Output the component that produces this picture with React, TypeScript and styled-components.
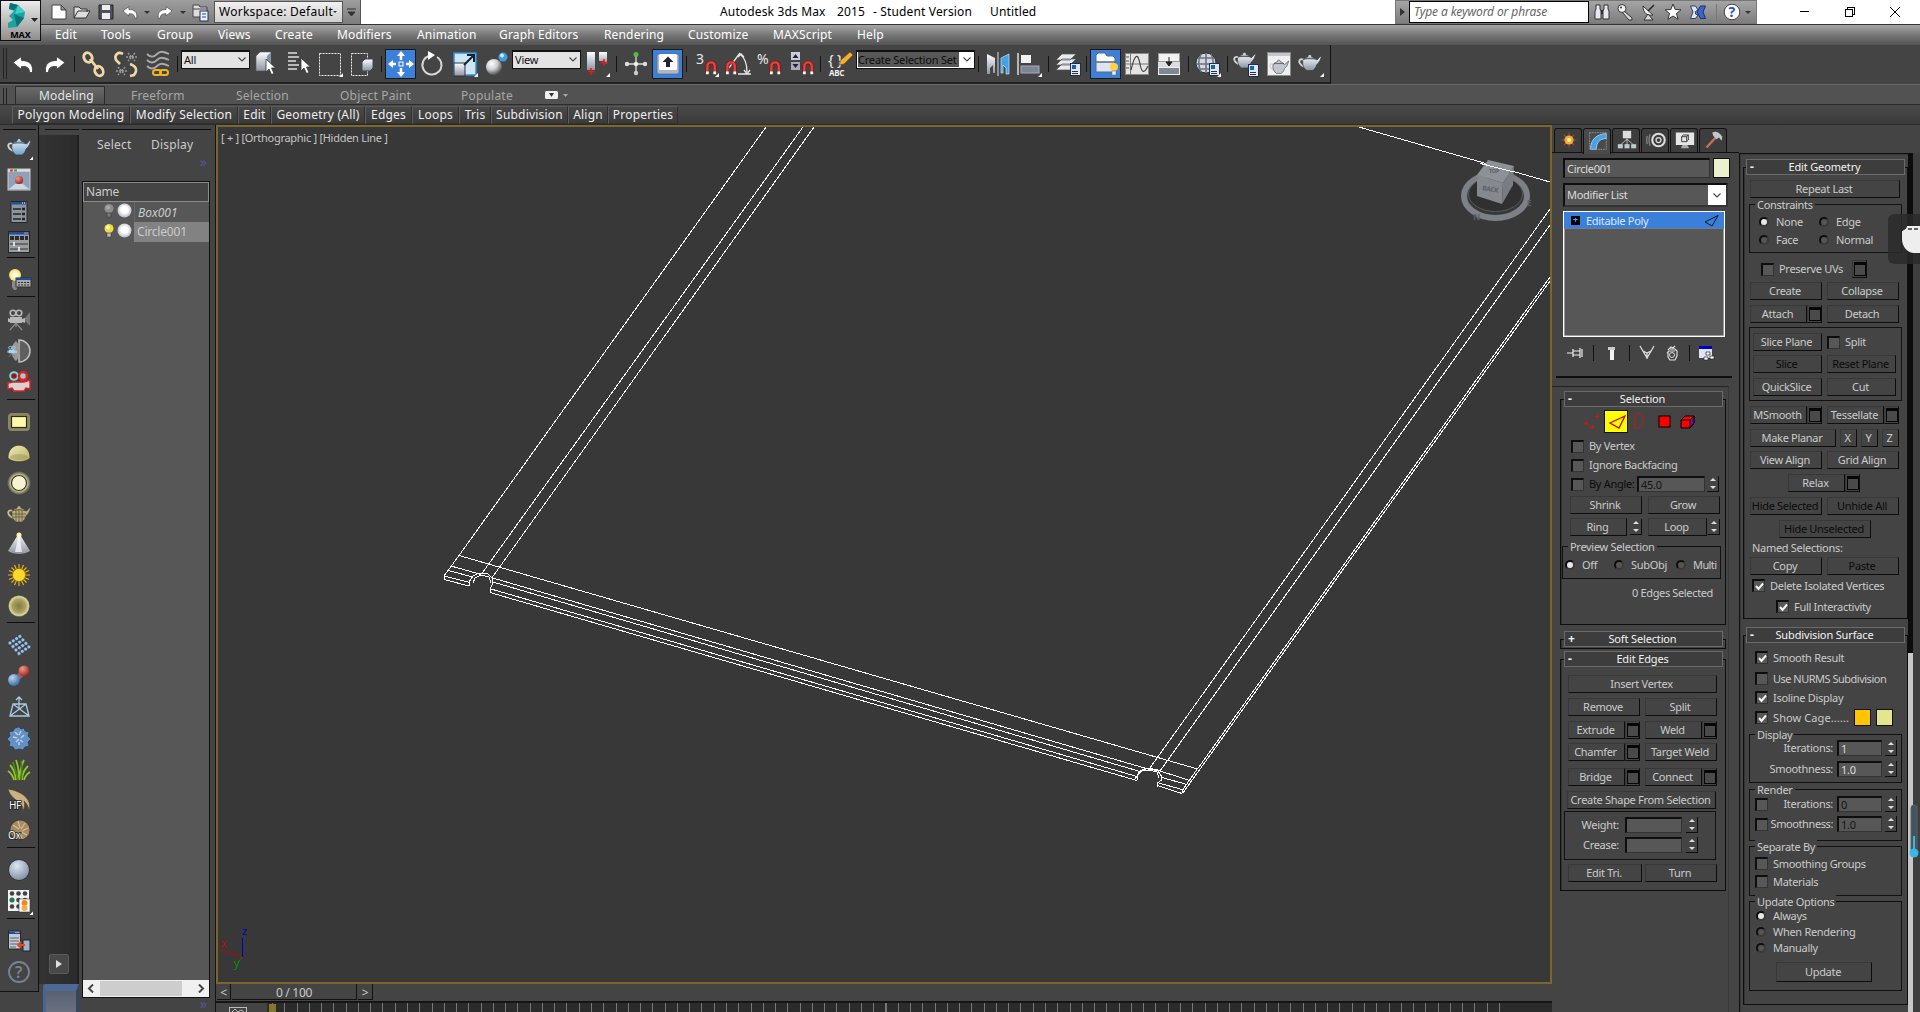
import React from 'react';
import styled, { createGlobalStyle, css } from 'styled-components';

const ui = '"Noto Sans", "Open Sans", sans-serif';

const Global = createGlobalStyle`
  * { box-sizing: border-box; }
  html, body { margin: 0; padding: 0; background: #444; overflow: hidden; }
  body { font: 11px/14px ${ui}; letter-spacing: -0.3px; color: #cbcbcb; cursor: default; }
  svg { display: block; flex: none; }
`;

const Shell = styled.div`
  width: 1920px; height: 1012px; overflow: hidden; display: flex; flex-direction: column; background: #444;
`;

/* ---------- icons ---------- */
const Svg = ({ s = 24, w, h, vb, children }: any) => (
  <svg width={w || s} height={h || s} viewBox={vb || '0 0 24 24'} fill="none">{children}</svg>
);

const DefsSvg = styled.svg`position: absolute; width: 0; height: 0;`;
const Defs = () => (
  <DefsSvg>
    <defs>
      <linearGradient id="met" x1="0" y1="0" x2="0" y2="1"><stop offset="0" stopColor="#fff" /><stop offset="1" stopColor="#8b94a3" /></linearGradient>
      <linearGradient id="blu" x1="0" y1="0" x2="0" y2="1"><stop offset="0" stopColor="#e4f1fb" /><stop offset="1" stopColor="#6d9fc6" /></linearGradient>
      <radialGradient id="ball" cx=".35" cy=".3" r=".8"><stop offset="0" stopColor="#fff" /><stop offset=".45" stopColor="#cdcfd2" /><stop offset="1" stopColor="#333" /></radialGradient>
      <radialGradient id="white" cx=".5" cy=".45" r=".6"><stop offset=".4" stopColor="#fff" /><stop offset="1" stopColor="#a9abb8" /></radialGradient>
      <radialGradient id="grey" cx=".4" cy=".3" r=".8"><stop offset="0" stopColor="#dde5f2" /><stop offset="1" stopColor="#75849a" /></radialGradient>
      <radialGradient id="blueb" cx=".35" cy=".3" r=".8"><stop offset="0" stopColor="#b9d9f5" /><stop offset="1" stopColor="#2d5e95" /></radialGradient>
      <radialGradient id="redb" cx=".35" cy=".3" r=".8"><stop offset="0" stopColor="#f39a8b" /><stop offset="1" stopColor="#8d1a14" /></radialGradient>
      <radialGradient id="yel" cx=".5" cy=".5" r=".55"><stop offset=".2" stopColor="#fffef0" /><stop offset="1" stopColor="#eedf4a" /></radialGradient>
      <radialGradient id="glow" cx=".5" cy=".5" r=".5"><stop offset=".6" stopColor="#e7e2a8" /><stop offset="1" stopColor="#e7e2a8" stopOpacity="0" /></radialGradient>
      <radialGradient id="disc" cx=".5" cy=".5" r=".5"><stop offset="0" stopColor="#817b3c" /><stop offset=".65" stopColor="#aba465" /><stop offset="1" stopColor="#efeab2" /></radialGradient>
      <linearGradient id="dome" x1="0" y1="0" x2="1" y2="1"><stop offset="0" stopColor="#f3eeb4" /><stop offset="1" stopColor="#b3ae64" /></linearGradient>
    </defs>
  </DefsSvg>
);

const Corner = () => <path d="M27 27v-4l-4 4z" fill="#fff" />;
const Cursor = ({ x = 14, y = 10 }: any) => (
  <path transform={`translate(${x} ${y})`} d="M0 0v13l3-3 2.500 5.500 2.500-1-2.500-5.500h4z" fill="#fff" stroke="#333" strokeWidth=".8" />
);
const Magnet = ({ x = 12, y = 13 }: any) => (
  <g transform={`translate(${x} ${y}) scale(.92)`}>
    <path d="M1.500 12V5.500a4 4 0 0 1 8 0V12" stroke="#7c1410" strokeWidth="4" />
    <path d="M1.500 12V5.500a4 4 0 0 1 8 0V12" stroke="#e8423a" strokeWidth="2.600" />
    <path d="M0 13h3M8 13h3" stroke="#fff" strokeWidth="3" />
  </g>
);
const Teapot = ({ fill = 'url(#met)', grid }: any) => (
  <g stroke="#3c3c3c" strokeWidth=".7">
    <path d="M6 9C1 7 0 11 3 14l3 2" stroke={grid ? '#c8bd8a' : '#cfd6de'} strokeWidth="1.800" />
    <path d="M5 9c2-2 12-2 14 0 2 0 2-3 5-4-1 3-2 7-5 9-1 4-3 5-4 6H9c-3-2-5-6-4-11z" fill={fill} />
    <path d="M10 6c0-3 4-3 4 0 2 .5 3 1 4 2H6c1-1 2-1.500 4-2z" fill={fill} />
    {grid && <path d="M5 12h14M6 15h12M9 8v11M12 7v13M15 8v11" stroke="#575236" />}
  </g>
);
const Win = ({ x = 2, y = 2, w = 20, h = 20, top = '#1d4f9c', bg = '#b4b4b4' }: any) => (
  <g>
    <rect x={x} y={y} width={w} height={h} fill={bg} stroke="#252525" />
    <rect x={x + 0.5} y={y + 0.5} width={w - 1} height="2.500" fill={top} />
    <path d={`M${x + w - 5} ${y + 1.5}h1m1 0h1`} stroke="#fff" /><path d={`M${x + w - 1.5} ${y + 1.5}h1`} stroke="#f33" />
  </g>
);
const Small = ({ x = 16, y = 14 }: any) => (
  <g transform={`translate(${x} ${y})`}>
    <rect x=".5" y=".5" width="10" height="12" fill="#dfe7f2" stroke="#1e2f4c" />
    <rect x="2" y="2" width="4" height="4" fill="#1860c0" /><path d="M2 8.500h6M2 10.500h6" stroke="#333" />
  </g>
);
const UndoShape = ({ flip }: any) => (
  <path transform={flip ? 'translate(28 0) scale(-1 1)' : ''} d="M4 12.500l8.500-6v4c7.500 0 11 3.500 11 9v3h-3c0-4.500-2.500-6.500-8-6v3z" fill="#fff" stroke="#333" strokeWidth=".8" />
);

const T28: Record<string, React.ReactNode> = {
  undo: <UndoShape />, redo: <UndoShape flip />,
  link: <g stroke="#f0d9a8" strokeWidth="2.800"><ellipse cx="8" cy="7.500" rx="4" ry="5" transform="rotate(-30 8 7.500)" /><path d="M10 9l8 10" /><ellipse cx="19" cy="21" rx="4" ry="5" transform="rotate(-30 19 21)" /></g>,
  unlink: <g stroke="#f0d9a8" strokeWidth="2.600"><path d="M11 4C6 1 2 5 4 10l4 4M18 14c6 2 8 6 4 11l-4 1" /><path d="M14 7h11M16 3l7 8M23 3l-7 8M4 21h11M6 17l7 8M13 17l-7 8" stroke="#9a9a9a" strokeWidth="1.300" strokeDasharray="2 1" /></g>,
  bind: <g stroke="#aaa" strokeWidth="1.800"><path d="M3 4c4 4 7 3 10 0s5-3 12 0M3 10c4 4 7 3 10 0s5-3 12 0M3 16c4 4 7 3 10 0s5-3 12 0" /><g stroke="#f2b51f" strokeWidth="2"><rect x="9" y="20" width="8" height="5" rx="2.500" /><rect x="16" y="20" width="8" height="5" rx="2.500" /></g></g>,
  select: <g><path d="M4 6l4-4h11v14l-4 5H4z" fill="url(#met)" stroke="#555" strokeWidth=".6" /><path d="M15 6v15l4-5V2z" fill="#8792a3" /><Cursor x={14} y={9} /></g>,
  byname: <g><path d="M4 3h9M4 7h11M4 11h8M4 15h11M4 19h9" stroke="#e0e0e0" strokeWidth="1.300" /><Cursor x={17} y={8} /></g>,
  rect: <g><rect x="3.500" y="3.500" width="21" height="22" stroke="#eee" strokeDasharray="2 1" /><Corner /></g>,
  window: <g><rect x="3.500" y="3.500" width="16" height="22" stroke="#eee" strokeDasharray="2 1" /><path d="M14 12l3-3h8v9l-3 3h-8z" fill="url(#met)" stroke="#445" /></g>,
  move: <g fill="#fff"><path d="M14 1l4 5h-8zM14 27l4-5h-8zM1 14l5-4v8zM27 14l-5-4v8z" /><path d="M14 5v5M14 18v5M5 14h4M19 14h4" stroke="#fff" strokeWidth="2.500" /><rect x="12" y="12" width="4" height="4" fill="none" stroke="#fff" /></g>,
  rotate: <g><path d="M11 6a9.500 9.500 0 1 0 8 1" stroke="#d8d8d8" strokeWidth="2" /><path d="M10 1l7 4-7 5z" fill="#fff" /></g>,
  scale: <g><rect x="3" y="3" width="22" height="22" fill="#cfe6f5" stroke="#3191d8" strokeWidth="1.500" /><rect x="3" y="13" width="11" height="13" fill="url(#met)" stroke="#334" /><path d="M13 15L22 6M16 5h7v7" stroke="#18222e" strokeWidth="2" /><Corner /></g>,
  place: <g><circle cx="11" cy="17" r="8" fill="url(#ball)" /><circle cx="20" cy="7" r="4.500" fill="#3d9de2" /><circle cx="19" cy="5.500" r="2" fill="#c4ecff" /></g>,
  pivot: <g><rect x="4" y="2" width="8" height="18" fill="url(#met)" /><path d="M16 2h8v12l-4-3h-4z" fill="url(#met)" /><path d="M8 18v7M5 21.500h7M21 9v7M17.500 12.500h7" stroke="#e21b1b" strokeWidth="1.600" /><Corner /></g>,
  manip: <g><path d="M14 3v22M3 14h22" stroke="#ddd" strokeWidth="1.300" /><circle cx="14" cy="4.500" r="2.500" fill="#4fbf3f" /><circle cx="14" cy="14" r="2.200" fill="#eee" /><circle cx="14" cy="23" r="2.200" fill="#ccc" /><circle cx="5" cy="14" r="2.200" fill="#ddd" /><circle cx="23" cy="14" r="2.200" fill="#ddd" /></g>,
  keyb: <g><rect x="3" y="4" width="22" height="20" rx="2" fill="#aeb6c2" stroke="#5a6270" strokeWidth=".6" /><rect x="5" y="4" width="18" height="16" rx="1.500" fill="#fff" /><path d="M14 6.500l5.500 5.500H16v5h-4v-5H8.500z" fill="#223" /></g>,
  snap3: <g><text x="4" y="14" fill="#e8e8e8" fontSize="14">3</text><Magnet x={14} y={11} /><Corner /></g>,
  angle: <g><path d="M4 19L16 3M14 24h13M16 4c5 4 7 10 7 18M14 7l3-3 3 3M20 20l3 4 3-4" stroke="#e8e8e8" strokeWidth="1.300" /><Magnet x={2} y={11} /></g>,
  pct: <g><text x="1" y="14" fill="#e8e8e8" fontSize="14">%</text><Magnet x={14} y={11} /></g>,
  spin: <g><rect x="3" y="2" width="9" height="8" fill="#ccd" /><rect x="3" y="12" width="9" height="8" fill="#aab" /><path d="M7.500 4l3 4h-6zM7.500 18l3-4h-6z" fill="#223" /><Magnet x={15} y={11} /></g>,
  sets: <g><text x="2" y="15" fill="#e8e8e8" fontSize="15">{'{ }'}</text><path d="M13 15l2-5L24 2l3 3-9 9z" fill="#f3b02c" stroke="#7a4a10" strokeWidth=".6" /><text x="3" y="26" fill="#eee" fontSize="8" fontWeight="700">ABC</text></g>,
  mirror: <g><path d="M3 4l8 4v15H9v-8l-3 3v6H3z" fill="url(#met)" /><path d="M25 4l-8 4v15h2v-8l3 3v6h3z" fill="#43a2e8" stroke="#c5e6ff" strokeWidth=".7" /><path d="M14 2v24" stroke="#ddd" /></g>,
  align: <g><path d="M3 3v22" stroke="#ddd" strokeWidth="1.500" /><rect x="6" y="5" width="10" height="8" fill="#f2f2f2" /><rect x="6" y="16" width="18" height="7" fill="#7c8695" stroke="#aab" /><Corner /></g>,
  layers: <g><path d="M8 4h14l-6 6H2zM8 9h14l-6 6H2zM8 14h14l-6 6H2z" fill="#e7ebf0" stroke="#555" strokeWidth=".7" /><Small x={16} y={13} /></g>,
  folder: <g><path d="M4 22V8h19v14z" fill="#dde4ee" stroke="#5d6878" /><path d="M4 12V5l2-2h7l2 3h6l2 2v4z" fill="#f8fafd" stroke="#5d6878" /><path d="M4 12h19" stroke="#5d6878" /><circle cx="22" cy="17" r="4" fill="#ffd13d" /><path d="M20 21h4v4h-4z" fill="#eee" stroke="#666" strokeWidth=".5" /></g>,
  curve: <g><rect x="2.500" y="3.500" width="23" height="21" fill="#e4e4e4" stroke="#888" /><path d="M7.500 3v22M2 14h24" stroke="#777" /><path d="M8 20c4-17 7-17 9-6s5 8 8 2" stroke="#444" strokeWidth="1.200" /><path d="M3 7h3M3 11h3M3 18h3" stroke="#555" /></g>,
  schem: <g><rect x="3.500" y="3.500" width="21" height="8" fill="#f2f2f2" stroke="#999" /><rect x="3" y="12" width="22" height="5" fill="#ddd" /><rect x="3.500" y="17.500" width="21" height="7" fill="#7f8893" stroke="#eee" /><path d="M14 7v6M11 12h6l-3 4z" stroke="#222" fill="#222" /></g>,
  mat: <g><circle cx="12" cy="13" r="10" fill="#d4d8de" stroke="#333" /><path d="M4 8h16M2 14h20M5 19h14M12 3v20M7 4c-3 6-3 12 0 18M17 4c3 6 3 12 0 18" stroke="#6b7380" strokeWidth="1.600" /><Small x={15} y={13} /><Corner /></g>,
  rsetup: <g><g transform="translate(0 -1) scale(.95)"><Teapot /></g><Small x={15} y={14} /></g>,
  rframe: <g><rect x="2.500" y="2.500" width="23" height="23" fill="#f0f0f0" stroke="#888" /><path d="M3 4.500h22" stroke="#c4c8ce" strokeWidth="3" /><g transform="translate(4 7) scale(.82)"><Teapot fill="#c3c7cc" /></g></g>,
  render: <g><g transform="translate(1 1) scale(.98)"><Teapot /></g><Corner /></g>,
};

const Bulb = ({ on = true }: any) => (
  <g><circle cx="8" cy="5.500" r="4.500" fill={on ? '#f5d93a' : '#8d8d8d'} /><circle cx="7" cy="4.500" r="2" fill={on ? '#fffbd0' : '#aaa'} /><path d="M6 10h4v4H6z" fill={on ? '#bbb' : '#777'} stroke="#333" strokeWidth=".5" /></g>
);
const Cam = ({ c = '#b8b8b8' }: any) => (
  <g><circle cx="6" cy="5" r="2.800" stroke={c} strokeWidth="1.600" /><circle cx="12" cy="5" r="2.800" stroke={c} strokeWidth="1.600" /><rect x="3" y="9" width="12" height="6" fill={c} /><path d="M1 10l2 1v3H1zM15 11l3-1v5l-3-1z" fill={c} /><path d="M9 15l-6 7M9 15l6 7M9 15v4" stroke="#888" strokeWidth="1.300" /></g>
);

const L24: Record<string, React.ReactNode> = {
  pot: <g><Teapot fill="url(#blu)" /><path d="M26 25v-3.500l-3.500 3.500z" fill="#fff" /></g>,
  vray: <g><rect x="1" y="1" width="22" height="21" fill="#8fa0b8" stroke="#c9c9c9" /><path d="M1 2.500h22" stroke="#ddd" strokeWidth="2.500" /><path d="M3 2.500h3" stroke="#e33" strokeWidth="2" /><path d="M7 2.500h3" stroke="#3a3" strokeWidth="2" /><path d="M2 21l6-5h8l6 5z" fill="#cdd6e2" /><circle cx="12" cy="12" r="4" fill="url(#redb)" /></g>,
  sheet: <g><Win x={4} w={16} h={21} y={1.5} bg="#8d939b" /><path d="M6 9h8M6 14h8M6 19h8" stroke="#222" strokeWidth="1.300" /><path d="M15 9h3M15 14h3M15 19h3" stroke="#222" strokeWidth="2.500" /></g>,
  tracks: <g><Win x={1.5} y={1.5} w={21} h={21} bg="#9a9da2" /><path d="M3 8h18" stroke="#2c2c2c" strokeWidth="4" strokeDasharray="4 1" /><path d="M3 14h18M3 19h18" stroke="#333" /><path d="M7 12v4M12 17v4" stroke="#fff" strokeWidth="1.500" /></g>,
  lamp: <g><circle cx="8" cy="7" r="6" fill="url(#yel)" /><path d="M5 13h6v6l-2 3H7l-2-3z" fill="#888" /><rect x="9" y="10" width="15" height="9" fill="#a8a8a8" stroke="#333" /><path d="M9 11h15" stroke="#1d4f9c" strokeWidth="2" /><path d="M11 14.500h11M11 17h11" stroke="#333" strokeDasharray="2 1" /></g>,
  cam: <g><Cam /><path d="M23 4v14l-5-5v-3z" fill="#777" /></g>,
  camdome: <g><path d="M12 1a11 11 0 0 1 0 22z" fill="#5f5f5f" stroke="#c0c0c0" strokeWidth="1.500" /><path d="M9 2c5 5 5 15 0 20a13 13 0 0 1 0-20z" fill="#999" /><g transform="translate(0 6) scale(.55)"><Cam c="#a4d4ee" /></g></g>,
  camred: <g><circle cx="7" cy="6" r="3.800" stroke="#6fe0e0" strokeWidth="2" fill="#a11" /><circle cx="16" cy="6" r="4" stroke="#e32222" strokeWidth="2.500" fill="#9cd" /><path d="M1 13l5-1h11l6-2v9l-4-1-2 3H7l-2-3-4 1z" fill="#ddd0d0" stroke="#d22" strokeWidth="1.400" /></g>,
  plane: <g><rect x="1" y="3" width="22" height="18" rx="4" fill="#9c9873" opacity=".8" /><rect x="4.500" y="6.500" width="15" height="11" fill="#fff9a8" stroke="#2d2b1c" strokeWidth="1.200" /></g>,
  dome: <g><path d="M1 18C1 1 23 1 23 18c-5 5-17 5-22 0z" fill="url(#dome)" stroke="#35331c" strokeWidth=".6" /><ellipse cx="12" cy="17" rx="9" ry="3" fill="#8f8a55" opacity=".4" /></g>,
  sph: <g><circle cx="12" cy="12" r="12" fill="url(#glow)" /><circle cx="12" cy="12" r="7.500" fill="#f7f4d4" stroke="#3a3823" strokeWidth="1.200" /></g>,
  mesh: <Teapot fill="#b9ad78" grid />,
  ies: <g><path d="M12 2l11 18c-6 4-16 4-22 0z" fill="url(#met)" /><path d="M12 3l3 18H8z" fill="#fff" opacity=".7" /><circle cx="12" cy="4" r="2.500" fill="#fff6b0" /></g>,
  sun: <g><path d="M12 1v22M1 12h22M4.500 4.500l15 15M19.500 4.500l-15 15M7.500 2l9 20M16.500 2l-9 20M2 7.500l20 9M22 7.500l-20 9" stroke="#e6b21e" strokeWidth="1.200" /><circle cx="12" cy="12" r="6.500" fill="#ffd829" stroke="#8c6a08" strokeWidth=".7" /></g>,
  disc: <circle cx="12" cy="12" r="10.500" fill="url(#disc)" stroke="#55522c" strokeWidth=".5" />,
  inst: <g>{[0, 1, 2, 3].map(i => [0, 1, 2, 3].map(j => <circle key={`${i}${j}`} cx={3 + i * 3 + j * 3.3} cy={10 - j * 2.2 + i * 3.5} r="1.900" fill="#9fc2e4" stroke="#243447" strokeWidth=".5" />))}</g>,
  meta: <g><path d="M8 12l7-6 3 5-6 5z" fill="#9d5f72" /><circle cx="7" cy="16" r="6" fill="url(#blueb)" /><circle cx="17" cy="7" r="5.500" fill="url(#redb)" /></g>,
  cage: <g stroke="#a5cbe4" strokeWidth="1.300"><path d="M3 21L6 9h13l3 12zM3 21L19 9M22 21L6 9M12 2v12M9 5l3-3 3 3" /></g>,
  fur: <g><path d="M12 1l2 2 3-1 1 3 4 1-1 4 3 3-3 3 1 4-4 1-2 3-4-1-4 1-2-3-4-1 1-4-3-3 3-3-1-4 4-1 2-3z" fill="#6590c2" stroke="#20324a" strokeWidth=".6" /><path d="M8 6l3 3M14 5l-2 4M6 11l4 1M17 9l-3 3M9 16l3-3M16 16l-3-2M12 19v-3" stroke="#b5d3f0" strokeWidth="1.500" /></g>,
  grass: <g stroke="#8fc62c" strokeWidth="1.800"><path d="M12 23C12 14 11 8 9 3M12 23c1-8 2-14 5-20M9 23C8 16 6 11 3 8M15 23c0-7 3-11 6-14M7 23c-1-4-3-7-6-9M17 23c1-4 3-6 6-8" /><path d="M11 23C9 14 7 10 6 5M14 23c1-7 1-13 0-19" stroke="#4f8216" /></g>,
  hf: <g><path d="M1 1c5 1 15 3 20 11 2 4 2 7 1 10-1-5-3-7-5-9 1 4 1 6-1 10 1-10-12-10-15-22z" fill="#c9b184" stroke="#4d3e22" strokeWidth=".6" /><text x="2" y="21" fontSize="10" fill="#fff" stroke="#222" strokeWidth="1.500" paintOrder="stroke">HF</text></g>,
  ox: <g><circle cx="13" cy="11" r="10" fill="#a58a63" stroke="#332a1c" strokeWidth=".6" /><path d="M6 6l6 4M11 2l2 7M18 4l-4 6M21 9l-6 3M20 16l-6-3M15 20l-2-6" stroke="#d6bd93" strokeWidth="1.300" /><text x="1" y="20" fontSize="10" fill="#fff" stroke="#222" strokeWidth="1.500" paintOrder="stroke">Ox</text></g>,
  ball: <circle cx="12" cy="12" r="10.500" fill="url(#grey)" stroke="#222" strokeWidth=".8" />,
  lib: <g><rect x="1" y="1" width="21" height="21" fill="#f2f2f2" /><g fill="#3d4247">{[3, 9.5, 16].map(x => [3, 9.5, 16].map(y => <circle key={`${x}${y}`} cx={x + 2} cy={y + 1.5} r="2.300" />))}</g><circle cx="5" cy="11" r="2.500" fill="#1d7a5a" /><rect x="12" y="10" width="11" height="13" fill="#fff" stroke="#333" strokeWidth=".6" /><circle cx="17.500" cy="14" r="3" fill="#f08a1c" /><circle cx="17.500" cy="19" r="3" fill="#f9a94a" /><path d="M26 26v-3.500l-3.500 3.500z" fill="#fff" /></g>,
  list: <g><Win x={1.5} y={2} w={12} h={18} bg="#c4cad2" /><path d="M3 9h9M3 12h9M3 15h9M3 18h6" stroke="#667" /><rect x="16" y="11" width="7" height="11" fill="#9fb4c8" stroke="#222" /><path d="M18 16h-7m3-3l-3 3 3 3" stroke="#e04a2a" strokeWidth="2" /></g>,
  help: <g><circle cx="12" cy="12" r="10" stroke="#778397" strokeWidth="1.800" /><text x="8" y="18" fontSize="16" fontWeight="600" fill="#778397">?</text></g>,
};

/* ---------- title area ---------- */
const TitleBar = styled.header`
  height: 25px; display: flex; background: #fff; border-bottom: 1px solid #333; position: relative;
  font-size: 12px; letter-spacing: .2px; color: #000;
`;
const AppButton = styled.div`
  position: absolute; left: 0; top: 0; width: 41px; height: 41px; z-index: 3; border: 1px solid #111;
  background: linear-gradient(#ececec, #8f8f8f); display: flex; flex-direction: column; align-items: center; color: #000;
  span { font: 700 9px/9px ${ui}; letter-spacing: 0; margin-top: 1px; }
`;
const Quick = styled.div`
  width: 361px; height: 24px; flex: none; padding-left: 47px; display: flex; align-items: center; background: linear-gradient(#9e9e9e, #7c7c7c);
  border-right: 1px solid #555;
`;
const QSlot = styled.div<{ $w: number }>`width: ${p => p.$w}px; display: flex; justify-content: center; flex: none;`;
const Workspace = styled.div`
  width: 129px; height: 22px; margin-left: 1px; padding: 0 5px 0 4px; border: 1px solid #555; background: linear-gradient(#f0f0f0, #cfcfcf);
  display: flex; align-items: center; justify-content: space-between; font-size: 12px; letter-spacing: .25px; white-space: nowrap;
`;
const Tri = styled.i<{ $c?: string; $s?: number }>`
  border: ${p => p.$s || 3}px solid transparent; border-top-color: ${p => p.$c || '#333'}; border-bottom: 0; width: 0; height: 0; flex: none;
`;
const Caption = styled.div`
  margin-left: 359px; width: 675px; flex: none; display: flex; align-items: center; white-space: pre; letter-spacing: .15px;
  span:nth-child(1) { width: 117px; } span:nth-child(2) { width: 36px; } span:nth-child(3) { width: 117px; }
`;
const Info = styled.div`
  width: 362px; height: 24px; flex: none; background: linear-gradient(#a5a5a5, #7d7d7d); border: 1px solid #777; display: flex; align-items: center;
`;
const SearchBox = styled.div`
  width: 180px; height: 22px; flex: none; margin-right: 1px; background: #fff; border: 1px solid #000; padding: 0 4px; color: #666; font: italic 12px/19px ${ui}; letter-spacing: -.1px;
`;
const WinBtns = styled.div`margin-left: 34px; flex: none; display: flex; align-items: center; gap: 22px;`;

const MenuBar = styled.nav`
  height: 20px; flex: none; background: linear-gradient(#a6a6a6, #777 50%, #545454); display: flex; padding-left: 55px;
  font-size: 12px; line-height: 19px; letter-spacing: .15px; color: #fff;
`;
const MenuItem = styled.span<{ $w: number }>`width: ${p => p.$w}px; flex: none; white-space: nowrap;`;

const Toolbar = styled.div`
  height: 39px; width: 1331px; flex: none; display: flex; align-items: center; background: #444;
  border-right: 1px solid #111; border-bottom: 2px solid #222; padding-left: 3px;
`;
const Grip = styled.div<{ $h?: number }>`width: 4px; height: ${p => p.$h || 31}px; border: solid #222; border-width: 0 1px; flex: none;`;
const TSep = styled.div`width: 7px; height: 16px; flex: none; display: flex; justify-content: center; &::after { content: ''; width: 1px; background: #151515; }`;
const TSlot = styled.div<{ $w: number; $on?: boolean }>`
  width: ${p => p.$w}px; height: 30px; flex: none; display: flex; align-items: center; justify-content: center; svg { overflow: visible; }
  ${p => p.$on && css`background: #3d80da; border: 1px solid #1a1a1a;`}
`;
const TSelect = styled.div<{ $w: number; $bg?: string }>`
  width: ${p => p.$w}px; height: 19px; margin-bottom: 9px; flex: none; display: flex; align-items: center; justify-content: space-between;
  background: ${p => p.$bg || '#e3e3e3'}; border: 1px solid #111; border-top-width: 2px; color: #111; padding: 0 3px 0 2px; letter-spacing: -.2px; white-space: nowrap;
`;
const SelText = styled.span`background: #575757; color: #0d0d0d; line-height: 15px; width: 101px; margin-left: -1px; letter-spacing: -.2px;`;

const RibbonTabs = styled.div`
  height: 20px; flex: none; display: flex; align-items: flex-end; background: #525252; border-top: 1px solid #696969; padding-left: 3px;
  font-size: 12px; letter-spacing: .2px; color: #a7a7a7;
`;
const RTab = styled.div<{ $w: number; $on?: boolean }>`
  width: ${p => p.$w}px; height: 18px; line-height: 19px; flex: none; white-space: nowrap;
  ${p => p.$on && css`background: linear-gradient(#6b6b6b, #4e4e4e); border: 1px solid #2c2c2c; border-bottom: 0; color: #e4e4e4; padding-left: 23px; margin: 0 26px 0 8px; line-height: 18px;`}
`;
const RibbonPanels = styled.div`
  height: 21px; flex: none; display: flex; background: linear-gradient(#4a4a4a, #3a3a3a); border-top: 1px solid #2c2c2c; border-bottom: 1px solid #2c2c2c; padding: 1px 0 0 12px;
  font-size: 12px; letter-spacing: .2px; color: #eee;
`;
const RPanel = styled.div<{ $w: number }>`
  width: ${p => p.$w}px; height: 18px; line-height: 16px; flex: none; display: flex; justify-content: center; border: 1px solid #2f2f2f; border-left-color: #5e5e5e; border-top-color: #5a5a5a; white-space: nowrap;
  &:first-child { letter-spacing: .3px; }
`;

/* ---------- body ---------- */
const Body = styled.main`display: flex; flex: 1; min-height: 0;`;
const LeftBar = styled.aside`width: 39px; height: 867px; border-right: 1px solid #111; border-bottom: 1px solid #111; padding: 4px 0 0 3px; flex: none;`;
const LSlot = styled.div<{ $mt: number }>`margin: ${p => p.$mt}px 0 0 4px; height: 24px; width: 24px; svg { overflow: visible; }`;
const LSep = styled.div<{ $mt: number }>`height: 1px; width: 28px; margin: ${p => p.$mt}px 0 0 4px; background: #0f0f0f;`;
const TopLine = styled.div<{ $w: number }>`height: 1px; background: #0f0f0f; width: ${p => p.$w}px; flex: none;`;

const Dark = styled.aside`
  width: 41px; flex: none; display: flex; flex-direction: column; align-items: flex-end; padding: 4px 1px 0 0;
`;
const DarkFill = styled.div`
  margin-top: 5px; width: 40px; height: 849px; flex: none; background: linear-gradient(90deg, #333, #2b2b2b); border-right: 2px solid #202020; display: flex; align-items: flex-end; padding: 0 0 10px 10px;
`;
const PlayBtn = styled.div`
  width: 20px; height: 20px; background: #484848; border: 1px solid #5a5a5a; border-radius: 2px; display: flex; align-items: center; justify-content: center;
  &::after { content: ''; border: 4px solid transparent; border-left: 6px solid #ddd; border-right: 0; }
`;
const BlueTab = styled.div`
  width: 36px; flex: 1; border: 3px solid #46658f; border-bottom: 0; border-right-color: #33465f; border-top-color: #4c6a93; border-top-width: 7px; border-radius: 3px 0 0 0; background: linear-gradient(#586173, #6a7080);
`;

const Scene = styled.aside`width: 136px; flex: none; padding: 4px 0 0 2px; display: flex; flex-direction: column; border-right: 1px solid #151515;`;
const SceneTabs = styled.div`display: flex; margin: 7px 0 0 15px; height: 16px; font-size: 12px; line-height: 15px; letter-spacing: .2px; span { width: 54px; }`;
const Chev = styled.div<{ $mt: number }>`color: #55569c; font-size: 14px; line-height: 12px; letter-spacing: -1px; text-align: right; padding-right: 9px; margin-top: ${p => p.$mt}px; height: 12px;`;
const Tree = styled.div`width: 128px; height: 817px; border: 1px solid #111; background: #575757; display: flex; flex-direction: column; font-size: 12px;`;
const TreeHead = styled.div`height: 20px; border: 1px solid #8c8c8c; background: #444; padding-left: 2px; line-height: 17px; letter-spacing: -.2px;`;
const TreeRow = styled.div<{ $on?: boolean }>`
  height: 20px; display: flex; align-items: flex-start; padding: 1px 0 0 18px;
  span { flex: 1; height: 20px; line-height: 19px; margin: -1px 0 0 1px; padding-left: 3px; letter-spacing: -.2px; ${p => (p.$on ? 'background: #828282; line-height: 20px;' : 'font-style: italic; border-left: 1px solid #666; line-height: 21px; letter-spacing: 0;')} }
`;
const HScroll = styled.div`
  margin-top: auto; height: 17px; background: #f0f0f0; display: flex; align-items: center; padding: 0 4px; justify-content: space-between;
  i { width: 82px; height: 15px; background: #cdcdcd; margin: 0 14px 0 4px; }
`;

const Center = styled.section`width: 1336px; flex: none; display: flex; flex-direction: column;`;
const View = styled.div`
  height: 859px; width: 1336px; border: 2px solid #7b672b; background: #383838; position: relative; overflow: hidden; svg { position: absolute; inset: 0; }
`;
const ViewLabel = styled.div`position: absolute; left: 3px; top: 4px; font-size: 11px; line-height: 14px; letter-spacing: -.28px; white-space: pre; color: #c6c6c6; z-index: 1;`;
const TimeRow = styled.div`display: flex; height: 19px; flex: none; border-bottom: 2px solid #151515; padding-left: 1px;`;
const TimeBtn = styled.div<{ $w: number }>`
  width: ${p => p.$w}px; height: 16px; border: solid #111; border-width: 0 1px 1px 0; text-align: center; line-height: 18px; font-size: 12px; margin-right: 1px; flex: none;
`;
const Track = styled.div`
  display: flex; flex: 1; padding-left: 13px; min-height: 0; overflow: hidden;
`;
const Ticks = styled.div`
  margin-left: 20px; width: 1286px; flex: none; background: #2b2b2b; padding-left: 2px; display: flex;
  i { width: 7px; height: 8px; margin-top: 1px; background: #85781f; }
`;
const TickRun = styled.div`
  flex: 1; margin-left: -4px; background: repeating-linear-gradient(90deg, #777 0 1px, transparent 1px 12.270px); background-size: 1228px 100%; background-repeat: no-repeat;
`;

/* ---------- command panel ---------- */
const Command = styled.aside`width: 187px; flex: none; padding-top: 3px; display: flex; flex-direction: column;`;
const CTabs = styled.div`display: flex; height: 25px; padding-left: 2px; border-bottom: 1px solid #111;`;
const CTab = styled.div<{ $on?: boolean }>`
  width: 28px; margin-right: 1px; height: ${p => (p.$on ? 26 : 24)}px; border: 1px solid #111; border-bottom: 0; border-radius: 3px 3px 0 0; background: ${p => (p.$on ? '#4a4a4a' : '#3d3d3d')};
  display: flex; align-items: center; justify-content: center; padding: 0 0 2px 1px;
`;
const Row = styled.div<{ $mt?: number; $x?: number; $h?: number; $gap?: number }>`
  display: flex; align-items: center; flex: none; white-space: nowrap; margin-top: ${p => p.$mt || 0}px; padding-left: ${p => p.$x || 0}px; height: ${p => p.$h || 18}px; gap: ${p => p.$gap || 0}px;
`;
const Field = styled.div<{ $w: number; $h?: number; $off?: boolean; $ml?: number }>`
  width: ${p => p.$w}px; height: ${p => p.$h || 16}px; line-height: ${p => (p.$h || 16) - 3}px; margin-left: ${p => p.$ml || 0}px; flex: none; background: #575757; border: solid #0e0e0e; border-width: 2px 1px 1px 2px; border-right-color: #333; border-bottom-color: #333;
  padding-left: 2px; color: ${p => (p.$off ? '#151515' : '#dcdcdc')};
`;
const Swatch = styled.div<{ $c: string; $w?: number; $h?: number; $ml?: number }>`
  width: ${p => p.$w || 17}px; height: ${p => p.$h || 17}px; background: ${p => p.$c}; border: 1px solid #111; margin-left: ${p => p.$ml || 0}px; flex: none;
`;
const Combo = styled.div`
  width: 165px; height: 24px; border: 2px solid #0e0e0e; border-right-color: #333; border-bottom-color: #333; background: #575757; display: flex; justify-content: space-between; line-height: 19px; padding-left: 2px; color: #dcdcdc;
  div { width: 18px; height: 20px; background: #fff; display: flex; align-items: center; justify-content: center; }
`;
const Stack = styled.div`margin: 4px 0 0 11px; width: 162px; height: 126px; border: 1px solid #fff; background: #575757; flex: none; box-shadow: inset 0 0 0 .5px #ddd;`;
const StackRow = styled.div`
  height: 17px; background: #3a80db; border-bottom: 1px solid #6e7d90; display: flex; align-items: center; padding: 1px 5px 0 7px; color: #dfe8f5; line-height: 14px;
  b { width: 9px; height: 9px; background: #000; color: #5aa0ff; font: 700 9px/8px ${ui}; text-align: center; margin-right: 6px; letter-spacing: 0; }
  span { flex: 1; }
`;
const Btn = styled.div<{ $w: number; $off?: boolean; $h?: number; $ml?: number }>`
  width: ${p => p.$w}px; height: ${p => p.$h || 18}px; line-height: ${p => (p.$h || 18) - 2}px; margin-left: ${p => p.$ml || 0}px; display: flex; justify-content: center; padding-right: 2px; flex: none;
  border: 1px solid #383838; border-right-color: #0d0d0d; border-bottom-color: #0d0d0d; color: ${p => (p.$off ? '#0b0b0b' : '#cbcbcb')};
`;
const Opt = styled.div<{ $ml?: number }>`
  width: 15px; height: 18px; flex: none; border: 1px solid #383838; border-right-color: #0d0d0d; border-bottom-color: #0d0d0d; margin-left: ${p => p.$ml || 0}px; display: flex; align-items: center; justify-content: center;
  &::after { content: ''; width: 10px; height: 10px; border: 1px solid #060606; border-top-width: 3px; background: #4a4a4a; }
`;
const Box = styled.div`
  width: 13px; height: 13px; flex: none; background: #575757; border: solid #0e0e0e; border-width: 2px 1px 1px 2px; border-right-color: #333; border-bottom-color: #333; display: flex; align-items: center; justify-content: center;
`;
const Check = ({ on }: { on?: boolean }) => (
  <Box>{on && <svg width="9" height="9" viewBox="0 0 9 9"><path d="M1 4l2.500 3L8 1.500" fill="none" stroke="#f4f4f4" strokeWidth="2" /></svg>}</Box>
);
const Radio = styled.i<{ $on?: boolean }>`
  width: 10px; height: 10px; flex: none; border-radius: 50%; border: 2px solid #0e0e0e; border-right-color: #3a3a3a; border-bottom-color: #3a3a3a; background: ${p => (p.$on ? '#e8e8e8' : '#555')};
`;
const Lab = styled.span<{ $w?: number; $ml?: number; $off?: boolean; $r?: boolean; $ls?: number }>`
  flex: none; ${p => p.$w && `width: ${p.$w}px;`} margin-left: ${p => p.$ml ?? 5}px; ${p => p.$off && 'color: #0b0b0b;'} ${p => p.$r && 'text-align: right;'} letter-spacing: ${p => p.$ls ?? -0.3}px;
`;
const SpinBox = styled.div<{ $ml?: number; $h?: number }>`
  width: 12px; height: ${p => p.$h || 16}px; flex: none; margin-left: ${p => p.$ml || 0}px; border: solid #0e0e0e; border-width: 0 1px 1px 0; display: flex; flex-direction: column; align-items: center; justify-content: space-around;
  &::before { content: ''; border: 3px solid transparent; border-bottom-color: #ddd; border-top: 0; }
  &::after { content: ''; border: 3px solid transparent; border-top-color: #ddd; border-bottom: 0; }
`;
const Roll = styled.div<{ $mt: number; $ml: number; $w: number }>`margin: ${p => p.$mt}px 0 0 ${p => p.$ml}px; width: ${p => p.$w}px; flex: none;`;
const RollHead = styled.div<{ $l: number }>`
  height: 16px; margin: 0 3px 0 ${p => p.$l}px; border: 1px solid #6a6a6a; background: #3d3d3d; color: #f2f2f2; position: relative; z-index: 1; display: flex; line-height: 14px; letter-spacing: -.15px;
  b { width: 16px; padding-left: 3px; font-size: 12px; line-height: 13px; } span { flex: 1; text-align: center; padding-right: 18px; }
`;
const RollBody = styled.div<{ $h: number }>`
  margin-top: -8px; height: ${p => p.$h}px; border: 1px solid #0e0e0e; box-shadow: inset 1px 0 0 #333; padding-top: 8px; display: flex; flex-direction: column;
`;
const Group = styled.div<{ $mt: number; $h: number; $ml: number; $w: number }>`
  margin: ${p => p.$mt}px 0 0 ${p => p.$ml}px; width: ${p => p.$w}px; height: ${p => p.$h}px; border: 1px solid #111; flex: none; display: flex; flex-direction: column;
`;
const GTitle = styled.span`align-self: flex-start; margin: -7px 0 -1px 5px; padding: 0 2px; height: 14px; background: #444; flex: none;`;
const Geo = styled.aside`width: 169px; margin-top: 28px; flex: none; border-left: 1px solid #111; border-top: 1px solid #111; box-shadow: inset 1px 1px 0 #383838; display: flex; flex-direction: column;`;
const Edge = styled.div`width: 12px; flex: none; margin-top: 28px; display: flex; background: #3e3e3e; position: relative;`;
const Bar = styled.div`width: 5px; background: linear-gradient(#0c0c0c 0 500px, #c8c8c8 500px);`;
const MouseBadge = styled.div`
  position: absolute; right: 0; top: 61px; width: 32px; height: 50px; background: rgba(42,42,42,.85); border-radius: 6px 0 0 6px; display: flex; align-items: center; justify-content: flex-end;
`;
const Thermo = styled.div`position: absolute; left: 1px; top: 651px;`;
const ToolIcons = styled.div`
  height: 16px; margin: 8px 0 0 14px; display: flex; align-items: center; flex: none;
  i { width: 1px; height: 16px; background: #111; }
`;
const Rule = styled.div`margin: 15px 0 0 4px; width: 176px; height: 2px; background: #0e0e0e; flex: none;`;
const Scroller = styled.div`margin-top: 8px; width: 177px; flex: 1; border-top: 1px solid #222; border-right: 1px solid #393939;`;

const Chevron = () => <svg width="8" height="5" viewBox="0 0 8 5"><path d="M.5 .5L4 4 7.500 .5" fill="none" stroke="#444" strokeWidth="1.100" /></svg>;
const TI = ({ n, w = 32, on }: any) => <TSlot $w={w} $on={on}><Svg s={28} vb="0 0 28 28">{T28[n]}</Svg></TSlot>;
const LI = ({ n, mt }: any) => <LSlot $mt={mt}><Svg>{L24[n]}</Svg></LSlot>;

const Scene3D = () => (
  <svg width="1332" height="855" viewBox="218 127 1332 855" fill="none">
    <g stroke="#fff" strokeWidth="1" shapeRendering="crispEdges">
      <path d="M766 127L459 555.500 444 576v3.500l25 6.500M803 127L481.500 574M814 127L492.500 577M1359 127L1550 182" />
      <path d="M459 555.500L1197.500 769M451 566l30 8.500M448 570.500l25 6.500M444 576l26 6.500" />
      <path d="M491 577.500L1148 769l12 2 30 9.500M493 582L1140 771.500M491 589L1137 776.500M490 592.500L1137 780.500" />
      <path d="M470 586l-1-4 4-6 6-3 9 1 4 4 1 5-3 6v4M473 583l2-5 6-3 8 2 2 6" />
      <path d="M1162 777.500l25 7M1157 782.500l25 7M1157 785.500l25 8 1-4 14-20" />
      <path d="M1137 780.500l1-6 5-5 6-1 8 1 4 6 0 5-4 3v3M1135 779l5-8 9-1 8 2 2 6" />
      <path d="M1149.500 768.500L1550 209M1160 771L1550 225M1197.500 769L1550 277M1182.500 793.500L1550 281" />
    </g>
    <ellipse cx="1495.500" cy="196" rx="31.500" ry="22" stroke="#7d8187" strokeWidth="6" />
    <ellipse cx="1495.500" cy="194" rx="27" ry="17.500" fill="#303030" stroke="#555a60" />
    <path d="M1477 175l26 8-1 21-25-8z" fill="#85888d" />
    <path d="M1488 160l26 6-11 17-26-8z" fill="#8e9197" />
    <path d="M1503 183l11-17-1 19-11 19z" fill="#797c82" />
    <path d="M1480.500 163.500L1514 172" stroke="#fff" shapeRendering="crispEdges" />
    <g fill="#5c6067" fontSize="6.500" fontWeight="700"><text x="1482" y="190" transform="rotate(10 1482 190)">BACK</text><text x="1489" y="173" fontSize="5.500">TOP</text><text x="1473" y="220" fontSize="9">N</text><text x="1527" y="206" fontSize="8">E</text></g>
    <path d="M242.500 957v-19" stroke="#0000c8" /><path d="M242 956.500L221 950" stroke="#c80000" /><path d="M242 957l-4 6" stroke="#009600" strokeDasharray="2 1" />
    <g fontSize="11"><text x="242" y="935" fill="#0000c8">z</text><text x="220.500" y="947" fill="#c80000">x</text><text x="234" y="967" fill="#009600">y</text></g>
  </svg>
);

const menus: [string, number][] = [['Edit', 46], ['Tools', 56], ['Group', 61], ['Views', 57], ['Create', 62], ['Modifiers', 80], ['Animation', 82], ['Graph Editors', 105], ['Rendering', 84], ['Customize', 85], ['MAXScript', 84], ['Help', 40]];
const panels: [string, number][] = [['Polygon Modeling', 118], ['Modify Selection', 108], ['Edit', 33], ['Geometry (All)', 94], ['Edges', 47], ['Loops', 47], ['Tris', 32], ['Subdivision', 77], ['Align', 40], ['Properties', 70]];
const leftTools: [string, number][] = [['pot', 5], ['vray', 9], ['sheet', 8], ['tracks', 6], ['-', 3], ['lamp', 10], ['-', 4], ['cam', 11], ['camdome', 7], ['camred', 7], ['-', 5], ['plane', 10], ['dome', 6], ['sph', 7], ['mesh', 7], ['ies', 5], ['sun', 8], ['disc', 7], ['-', 4], ['inst', 10], ['meta', 7], ['cage', 7], ['fur', 7], ['grass', 7], ['hf', 7], ['ox', 7], ['-', 4], ['ball', 10], ['lib', 7], ['-', 5], ['list', 10], ['help', 7]];

const Head = ({ t, open = true, l = 4 }: any) => <RollHead $l={l}><b>{open ? '-' : '+'}</b><span>{t}</span></RollHead>;

export default function App() {
  return (
    <Shell>
      <Global /><Defs />
      <TitleBar>
        <AppButton>
          <Svg w={37} h={28} vb="0 0 37 28"><path d="M8 2l8 2 7 7-1 6-7 9-9 1 0-5 5-3-4-4 5-5-5-2z" fill="#19a5a3" /><path d="M8 2l8 2-4 5-5-1zM12 13l10 4-7 9z" fill="#0b7377" /><path d="M16 4l7 7-10 2z" fill="#3fd0c8" /><path d="M29 17h7l-3.500 4z" fill="#223" /></Svg>
          <span>MAX</span>
        </AppButton>
        <Quick>
          <QSlot $w={23}><Svg s={18} vb="0 0 18 18"><path d="M2 2h9l5 5v9H2zM11 2v5h5" fill="#fff" stroke="#444" /></Svg></QSlot>
          <QSlot $w={24}><Svg s={18} vb="0 0 18 18"><path d="M1 15V4h5l2 2h6v3M1 15l4-7h12l-4 7z" fill="#ddd" stroke="#333" /></Svg></QSlot>
          <QSlot $w={24}><Svg s={18} vb="0 0 18 18"><path d="M2 2h14v14H2z" fill="#4c5260" stroke="#222" /><path d="M5 2h8v5H5zM5 10h8v6H5z" fill="#eee" /></Svg></QSlot>
          <QSlot $w={24}><Svg s={20} vb="0 0 28 28"><UndoShape /></Svg></QSlot>
          <QSlot $w={10}><Tri /></QSlot>
          <QSlot $w={26}><Svg s={20} vb="0 0 28 28"><UndoShape flip /></Svg></QSlot>
          <QSlot $w={10}><Tri /></QSlot>
          <QSlot $w={25}><Svg s={19} vb="0 0 19 19"><path d="M2 2h6l1 2h7v10H2z" fill="#ddd" stroke="#444" /><path d="M2 6h14" stroke="#444" /><rect x="9" y="8" width="8" height="10" fill="#eef" stroke="#235" /><path d="M11 11h4M11 14h4" stroke="#15a" /></Svg></QSlot>
          <Workspace><span>Workspace: Default</span><Tri $s={2.5} /></Workspace>
          <QSlot $w={17}><Svg w={9} h={9} vb="0 0 9 9"><path d="M0 1h9M1 4h7L4.500 8z" fill="#333" stroke="#333" /></Svg></QSlot>
        </Quick>
        <Caption><span>Autodesk 3ds Max</span><span>2015</span><span>- Student Version</span><span>Untitled</span></Caption>
        <Info>
          <QSlot $w={13}><Svg w={5} h={8} vb="0 0 5 8"><path d="M0 0l5 4-5 4z" fill="#333" /></Svg></QSlot>
          <SearchBox>Type a keyword or phrase</SearchBox>
          <QSlot $w={23}><Svg s={18} vb="0 0 18 18"><path d="M3 2h4v4l1 2v8H2V8l1-2zM11 2h4v4l1 2v8h-6V8l1-2z" fill="#e8e8ee" stroke="#333" /><path d="M8 7h2v4H8z" fill="#333" /></Svg></QSlot>
          <QSlot $w={24}><Svg s={18} vb="0 0 18 18"><path d="M8 8l8 7v2h-3L6.500 9.500z" fill="#ddd" stroke="#333" /><circle cx="6" cy="5.500" r="4" fill="#f2f2f2" stroke="#333" /><circle cx="5" cy="4.500" r="1" fill="#333" /></Svg></QSlot>
          <QSlot $w={24}><Svg s={18} vb="0 0 18 18"><path d="M3 3c0 7 4 10 10 9z" fill="#eee" stroke="#333" /><path d="M8 8l6-6" stroke="#222" strokeWidth="1.500" /><path d="M8 11l5 6H4z" fill="#ddd" stroke="#333" /></Svg></QSlot>
          <QSlot $w={24}><Svg s={18} vb="0 0 18 18"><path d="M9 1l2.200 5.500 5.800.3-4.500 3.700 1.500 5.800L9 13l-5 3.300 1.500-5.800L1 6.800l5.800-.3z" fill="#fff" stroke="#333" /></Svg></QSlot>
          <QSlot $w={25}><Svg s={18} vb="0 0 18 18"><path d="M1.500 3h5l2.500 4-2.500 1.500V11L9 12l-2.500 3.500h-5L4 9z" fill="#dfe6f6" stroke="#33406e" /><path d="M16.500 3h-5L8 9l3.500 6.500h5L14 9z" fill="#3a66cc" stroke="#1c2f6e" /></Svg></QSlot>
          <QSlot $w={12}><Svg w={1} h={16} vb="0 0 1 16"><path d="M.5 0v16" stroke="#777" /></Svg></QSlot>
          <QSlot $w={20}><Svg s={18} vb="0 0 18 18"><circle cx="9" cy="9" r="7.800" fill="#fff" stroke="#444" /><text x="5.500" y="14" fontSize="14" fontWeight="700" fill="#1d56c0">?</text></Svg></QSlot>
          <QSlot $w={12}><Tri /></QSlot>
        </Info>
        <WinBtns>
          <Svg s={24}><path d="M9 11.500h9" stroke="#000" shapeRendering="crispEdges" /></Svg>
          <Svg s={24}><path d="M8.500 9.500h7v7h-7zM10.500 9V7.500h7v7H16" stroke="#000" shapeRendering="crispEdges" /></Svg>
          <Svg s={24}><path d="M7 7l10 10M17 7L7 17" stroke="#000" /></Svg>
        </WinBtns>
      </TitleBar>
      <MenuBar>{menus.map(([t, w]) => <MenuItem key={t} $w={w}>{t}</MenuItem>)}</MenuBar>
      <Toolbar>
        <Grip /><TI n="undo" /><TI n="redo" /><TSep /><TI n="link" /><TI n="unlink" /><TI n="bind" /><TSep />
        <TSelect $w={69}>All<Chevron /></TSelect>
        <TI n="select" /><TI n="byname" /><TI n="rect" /><TI n="window" /><TSep /><TI n="move" w={31} on /><TI n="rotate" /><TI n="scale" w={34} /><TI n="place" w={30} />
        <TSelect $w={69}>View<Chevron /></TSelect>
        <TI n="pivot" w={32} /><TSep /><TI n="manip" w={32} /><TI n="keyb" w={31} on /><TSep /><TI n="snap3" /><TI n="angle" /><TI n="pct" /><TI n="spin" w={31} /><TSep /><TI n="sets" />
        <TSelect $w={119} $bg="#fff"><SelText>Create Selection Set</SelText><Chevron /></TSelect>
        <TSep /><TI n="mirror" w={31} /><TI n="align" /><TSep /><TI n="layers" w={31} /><TSep /><TI n="folder" w={31} on /><TI n="curve" /><TI n="schem" /><TSep /><TI n="mat" /><TSep /><TI n="rsetup" /><TI n="rframe" /><TI n="render" />
      </Toolbar>
      <RibbonTabs>
        <Grip $h={16} />
        <RTab $w={90} $on>Modeling</RTab><RTab $w={105}>Freeform</RTab><RTab $w={104}>Selection</RTab><RTab $w={121}>Object Paint</RTab><RTab $w={84}>Populate</RTab>
        <Svg w={26} h={18} vb="0 0 26 18"><rect x="0" y="5" width="13" height="8" rx="1.500" fill="#f0f0f0" /><path d="M4 7h5l-2.500 4z" fill="#333" /><path d="M18 8h5l-2.500 3z" fill="#aaa" /></Svg>
      </RibbonTabs>
      <RibbonPanels>{panels.map(([t, w]) => <RPanel key={t} $w={w}>{t}</RPanel>)}</RibbonPanels>

      <Body>
        <LeftBar>
          <TopLine $w={33} />
          {leftTools.map(([n, mt], i) => n === '-' ? <LSep key={i} $mt={mt} /> : <LI key={i} n={n} mt={mt} />)}
        </LeftBar>
        <Dark>
          <TopLine $w={34} />
          <DarkFill><PlayBtn /></DarkFill>
          <BlueTab />
        </Dark>
        <Scene>
          <TopLine $w={129} />
          <SceneTabs><span>Select</span><span>Display</span></SceneTabs>
          <Chev $mt={3}>»</Chev>
          <Row $h={13} />
          <Tree>
            <TreeHead>Name</TreeHead>
            <TreeRow><Svg s={16} vb="0 0 16 16"><Bulb on={false} /></Svg><Svg s={16} vb="0 0 16 16"><circle cx="7.500" cy="7.500" r="7" fill="url(#white)" /></Svg><span>Box001</span></TreeRow>
            <TreeRow $on><Svg s={16} vb="0 0 16 16"><Bulb /></Svg><Svg s={16} vb="0 0 16 16"><circle cx="7.500" cy="7.500" r="7" fill="url(#white)" /></Svg><span>Circle001</span></TreeRow>
            <HScroll><Svg w={8} h={9} vb="0 0 8 9"><path d="M6 .5L2 4.500 6 8.500" stroke="#444" strokeWidth="2" /></Svg><i /><Svg w={8} h={9} vb="0 0 8 9"><path d="M2 .5L6 4.500 2 8.500" stroke="#444" strokeWidth="2" /></Svg></HScroll>
          </Tree>
          <Chev $mt={0}>»</Chev>
        </Scene>

        <Center>
          <View>
            <ViewLabel>[ + ] [Orthographic ] [Hidden Line ]</ViewLabel>
            <Scene3D />
          </View>
          <TimeRow><TimeBtn $w={14}>&lt;</TimeBtn><TimeBtn $w={125}>0 / 100</TimeBtn><TimeBtn $w={15}>&gt;</TimeBtn></TimeRow>
          <Track>
            <Svg w={18} h={9} vb="0 0 18 9"><rect x=".5" y="4.500" width="17" height="8" stroke="#bbb" /><path d="M3 9l3-3 3 3 3-2 3 2" stroke="#bbb" /></Svg>
            <Ticks><i /><TickRun /></Ticks>
          </Track>
        </Center>

        <Command>
          <CTabs>
            <CTab><Svg s={20}><path d="M12 3v18M3 12h18M6 6l12 12M18 6L6 18" stroke="#a04a3c" strokeWidth="1.300" /><circle cx="12" cy="12" r="5.500" fill="#f8a928" /><circle cx="12" cy="12" r="2.500" fill="#fff6a8" /></Svg></CTab>
            <CTab $on><Svg s={20}><path d="M3 22C3 10 10 4 22 3v6C14 9 10 14 10 22z" fill="#4ba0e4" stroke="#a5d8ff" /><path d="M2 2h20v20H2z" stroke="#999" strokeDasharray="2 1" /></Svg></CTab>
            <CTab><Svg s={20}><rect x="7" y="1" width="10" height="9" fill="#ddd" /><path d="M12 10v8M12 11l-8 7M12 11l8 7" stroke="#ccc" /><rect x="1" y="17" width="6" height="5" fill="#bcc" /><rect x="9" y="17" width="6" height="5" fill="#bcc" /><rect x="17" y="17" width="6" height="5" fill="#bcc" /></Svg></CTab>
            <CTab><Svg s={20}><circle cx="15" cy="12" r="7.500" stroke="#ddd" strokeWidth="2.500" /><circle cx="15" cy="12" r="3" stroke="#ddd" strokeWidth="1.500" /><path d="M5 5c-2 5-2 9 0 14M1.500 7c-1 4-1 6 0 10" stroke="#888" strokeWidth="1.500" /></Svg></CTab>
            <CTab><Svg s={20}><rect x="1" y="3" width="22" height="15" fill="#e6e6e6" /><path d="M7 22h10l-2-4H9z" fill="#aaa" /><path d="M8 8l2-2h6v6l-2 2H8zM8 8h6v6M14 8l2-2" stroke="#222" /></Svg></CTab>
            <CTab><Svg s={20}><path d="M3 21L14 9" stroke="#c96a5a" strokeWidth="3" /><path d="M10 3c5-2 8 0 12 5l-1 5-3-4-3 2-4-4z" fill="#bfc6cd" /></Svg></CTab>
          </CTabs>
          <Row $mt={5} $x={11} $h={20}><Field $w={147} $h={20}>Circle001</Field><Swatch $ml={3} $w={17} $h={20} $c="#ebf1cd" /></Row>
          <Row $mt={5} $x={11} $h={24}><Combo>Modifier List<div><Chevron /></div></Combo></Row>
          <Stack><StackRow><b>+</b><span>Editable Poly</span><Svg w={15} h={12} vb="0 0 15 12"><path d="M14 .5L1 7l7 4z" stroke="#10131a" /></Svg></StackRow></Stack>
          <ToolIcons>
            <Svg w={27} h={14} vb="0 0 27 14"><path d="M1 7h6M7 3v8M7 5h7v4H7zM14 2v10M16 3v8" stroke="#eee" strokeWidth="1.200" /></Svg><i />
            <Svg w={35} h={16} vb="0 0 35 16"><path d="M14 2h7v3h-7z" fill="#ccc" /><path d="M16 5h4v10h-4z" fill="#f3f3f3" /></Svg><i />
            <Svg w={35} h={16} vb="0 0 35 16"><path d="M10 1l7 12 7-12M13 6l4 2 4-2M17 8v6" stroke="#ddd" strokeWidth="1.300" /></Svg>
            <Svg w={24} h={16} vb="0 0 24 16"><path d="M3 5l3-3 2 1 2-2M2 8l2-2h6M3 7v5l2 3h5l2-4V6l-2-2H5" stroke="#ddd" strokeWidth="1.200" /><circle cx="7" cy="10" r="2.500" stroke="#ddd" /></Svg><i />
            <Svg w={30} h={16} vb="0 0 30 16"><path d="M9 1h13v12H9z" fill="#dfe3f4" /><path d="M9 2.500h13" stroke="#0000c8" strokeWidth="3" /><path d="M16 7h4v3h-4zM20 11h4v3h-4zM14 12h4v3h-4z" fill="#fff" stroke="#222" strokeWidth=".7" /></Svg>
          </ToolIcons>
          <Rule />
          <Scroller>
            <Roll $mt={4} $ml={8} $w={166}>
              <Head t="Selection" />
              <RollBody $h={226}>
                <Row $mt={2} $x={20} $h={23}>
                  <Svg w={23} h={20} vb="0 0 23 20"><path d="M5 9v4M3 11h4M11 13v4M9 15h4M16 2v4M14 4h4" stroke="#f00" shapeRendering="crispEdges" /></Svg>
                  <Swatch $c="#ffff00" $w={24} $h={23}><Svg w={22} h={21} vb="0 0 22 21"><path d="M20 5L5 12l9 5z" stroke="#c00" strokeWidth="1.300" /></Svg></Swatch>
                  <Svg w={30} h={20} vb="0 0 30 20"><path d="M8 2c4-2 9 3 7 8s-6 8-8 6 1-5 0-8-1-5 1-6z" stroke="#f00" strokeDasharray="2 1" /></Svg>
                  <Svg w={14} h={14} vb="0 0 14 14"><rect x="1" y="1" width="11" height="11" fill="#f00" stroke="#000" /></Svg>
                  <Svg w={24} h={14} vb="0 0 24 14"><path d="M9 5l4-4h9v7l-4 5H9z" fill="#f00" stroke="#000" /><path d="M18 5l4-4v7l-4 5z" fill="#808" stroke="#000" /><path d="M9 5h9" stroke="#000" /></Svg>
                </Row>
                <Row $mt={6} $x={10} $h={14}><Check /><Lab>By Vertex</Lab></Row>
                <Row $mt={5} $x={10} $h={14}><Check /><Lab>Ignore Backfacing</Lab></Row>
                <Row $mt={4} $x={10} $h={16}><Check /><Lab $off $w={48}>By Angle:</Lab><Field $w={68} $off>45.0</Field><SpinBox $ml={2} /></Row>
                <Row $mt={4} $x={9} $gap={6}><Btn $w={72}>Shrink</Btn><Btn $w={72}>Grow</Btn></Row>
                <Row $mt={4} $x={9}><Btn $w={57}>Ring</Btn><SpinBox $ml={3} /><Btn $w={59} $ml={6}>Loop</Btn><SpinBox $ml={1} /></Row>
                <Group $mt={10} $h={33} $ml={1} $w={159}>
                  <GTitle>Preview Selection</GTitle>
                  <Row $mt={4} $x={2} $h={15}><Radio $on /><Lab $w={32} $ml={7}>Off</Lab><Radio /><Lab $w={45} $ml={7}>SubObj</Lab><Radio /><Lab $ml={7} $ls={-0.6}>Multi</Lab></Row>
                </Group>
                <Row $mt={5} $x={71}><Lab $ml={0} $ls={-0.35}>0 Edges Selected</Lab></Row>
              </RollBody>
            </Roll>
            <Roll $mt={6} $ml={8} $w={166}><Head t="Soft Selection" open={false} /><RollBody $h={9} /></Roll>
            <Roll $mt={2} $ml={8} $w={166}>
              <Head t="Edit Edges" />
              <RollBody $h={232}>
                <Row $mt={7} $x={7}><Btn $w={149}>Insert Vertex</Btn></Row>
                <Row $mt={5} $x={7} $gap={5}><Btn $w={72}>Remove</Btn><Btn $w={72}>Split</Btn></Row>
                <Row $mt={5} $x={7}><Btn $w={57}>Extrude</Btn><Opt /><Btn $w={57} $ml={5}>Weld</Btn><Opt /></Row>
                <Row $mt={4} $x={7}><Btn $w={57}>Chamfer</Btn><Opt /><Btn $w={72} $ml={5}>Target Weld</Btn></Row>
                <Row $mt={7} $x={7}><Btn $w={57}>Bridge</Btn><Opt /><Btn $w={57} $ml={5}>Connect</Btn><Opt /></Row>
                <Row $mt={5} $x={6}><Btn $w={149}>Create Shape From Selection</Btn></Row>
                <Group $mt={2} $h={49} $ml={3} $w={152}>
                  <Row $mt={5} $h={16}><Lab $w={54} $ml={0} $r>Weight:</Lab><Field $ml={6} $w={57} /><SpinBox $ml={4} /></Row>
                  <Row $mt={4} $h={16}><Lab $w={54} $ml={0} $r>Crease:</Lab><Field $ml={6} $w={57} /><SpinBox $ml={4} /></Row>
                </Group>
                <Row $mt={4} $x={7}><Btn $w={74}>Edit Tri.</Btn><Btn $w={72} $ml={3}>Turn</Btn></Row>
              </RollBody>
            </Roll>
          </Scroller>
        </Command>

        <Geo>
          <Roll $mt={5} $ml={3} $w={165}>
            <Head t="Edit Geometry" l={3} />
            <RollBody $h={452}>
              <Row $mt={4} $x={6}><Btn $w={150}>Repeat Last</Btn></Row>
              <Group $mt={6} $h={49} $ml={5} $w={153}>
                <GTitle>Constraints</GTitle>
                <Row $mt={2} $x={9} $h={17}><Radio $on /><Lab $w={43} $ml={7}>None</Lab><Radio /><Lab $ml={7}>Edge</Lab></Row>
                <Row $mt={1} $x={9} $h={17}><Radio /><Lab $w={43} $ml={7}>Face</Lab><Radio /><Lab $ml={7}>Normal</Lab></Row>
              </Group>
              <Row $mt={7} $x={17}><Check /><Lab $w={73}>Preserve UVs</Lab><Opt /></Row>
              <Row $mt={4} $x={6} $gap={5}><Btn $w={72}>Create</Btn><Btn $w={72}>Collapse</Btn></Row>
              <Row $mt={5} $x={6}><Btn $w={57}>Attach</Btn><Opt /><Btn $w={72} $ml={5}>Detach</Btn></Row>
              <Group $mt={4} $h={74} $ml={5} $w={153}>
                <Row $mt={5} $x={3}><Btn $w={69}>Slice Plane</Btn><Lab $ml={5} /><Check /><Lab>Split</Lab></Row>
                <Row $mt={4} $x={3} $gap={5}><Btn $off $w={69}>Slice</Btn><Btn $off $w={69}>Reset Plane</Btn></Row>
                <Row $mt={5} $x={3} $gap={5}><Btn $w={69}>QuickSlice</Btn><Btn $w={69}>Cut</Btn></Row>
              </Group>
              <Row $mt={5} $x={6}><Btn $w={57}>MSmooth</Btn><Opt /><Btn $w={57} $ml={5}>Tessellate</Btn><Opt /></Row>
              <Row $mt={5} $x={6} $gap={4}><Btn $w={86}>Make Planar</Btn><Btn $w={17}>X</Btn><Btn $w={17}>Y</Btn><Btn $w={17}>Z</Btn></Row>
              <Row $mt={4} $x={6} $gap={5}><Btn $w={72}>View Align</Btn><Btn $w={72}>Grid Align</Btn></Row>
              <Row $mt={5} $x={44}><Btn $w={57}>Relax</Btn><Opt /></Row>
              <Row $mt={5} $x={6} $gap={5}><Btn $off $w={72}>Hide Selected</Btn><Btn $off $w={72}>Unhide All</Btn></Row>
              <Row $mt={5} $x={35}><Btn $off $w={92}>Hide Unselected</Btn></Row>
              <Row $mt={2} $x={8} $h={16}><Lab $ml={0}>Named Selections:</Lab></Row>
              <Row $mt={1} $x={6} $gap={5}><Btn $w={72}>Copy</Btn><Btn $off $w={72}>Paste</Btn></Row>
              <Row $mt={3} $x={8} $h={15}><Check on /><Lab>Delete Isolated Vertices</Lab></Row>
              <Row $mt={6} $x={32} $h={15}><Check on /><Lab>Full Interactivity</Lab></Row>
            </RollBody>
          </Roll>
          <Roll $mt={8} $ml={3} $w={165}>
            <Head t="Subdivision Surface" l={3} />
            <RollBody $h={370}>
              <Row $mt={6} $x={11} $h={15}><Check on /><Lab>Smooth Result</Lab></Row>
              <Row $mt={6} $x={11} $h={15}><Check /><Lab $ls={-0.5}>Use NURMS Subdivision</Lab></Row>
              <Row $mt={4} $x={11} $h={15}><Check on /><Lab>Isoline Display</Lab></Row>
              <Row $mt={4} $x={11} $h={17}><Check on /><Lab $w={81} $ls={0.1}>Show Cage......</Lab><Swatch $c="#ffc600" /><Swatch $ml={5} $c="#e4e58f" /></Row>
              <Group $mt={8} $h={49} $ml={5} $w={153}>
                <GTitle>Display</GTitle>
                <Row $mt={-1} $h={16}><Lab $w={83} $ml={0} $r>Iterations:</Lab><Field $ml={4} $w={45}>1</Field><SpinBox $ml={3} /></Row>
                <Row $mt={5} $h={16}><Lab $w={83} $ml={0} $r>Smoothness:</Lab><Field $ml={4} $w={45}>1.0</Field><SpinBox $ml={3} /></Row>
              </Group>
              <Group $mt={6} $h={52} $ml={5} $w={153}>
                <GTitle>Render</GTitle>
                <Row $mt={0} $x={5} $h={16}><Check /><Lab $w={65} $ml={0} $r>Iterations:</Lab><Field $off $ml={4} $w={45}>0</Field><SpinBox $ml={3} /></Row>
                <Row $mt={4} $x={5} $h={16}><Check /><Lab $w={65} $ml={0} $r $ls={-0.4}>Smoothness:</Lab><Field $off $ml={4} $w={45}>1.0</Field><SpinBox $ml={3} /></Row>
              </Group>
              <Group $mt={5} $h={50} $ml={5} $w={153}>
                <GTitle>Separate By</GTitle>
                <Row $mt={3} $x={5} $h={15}><Check /><Lab>Smoothing Groups</Lab></Row>
                <Row $mt={3} $x={5} $h={15}><Check /><Lab>Materials</Lab></Row>
              </Group>
              <Group $mt={5} $h={90} $ml={5} $w={153}>
                <GTitle>Update Options</GTitle>
                <Row $mt={0} $x={6} $h={16}><Radio $on /><Lab $ml={7}>Always</Lab></Row>
                <Row $x={6} $h={16}><Radio /><Lab $ml={7}>When Rendering</Lab></Row>
                <Row $x={6} $h={16}><Radio /><Lab $ml={7}>Manually</Lab></Row>
                <Row $mt={6} $x={26} $h={20}><Btn $w={96} $h={20}>Update</Btn></Row>
              </Group>
            </RollBody>
          </Roll>
        </Geo>
        <Edge>
          <Bar />
          <MouseBadge><Svg w={18} h={28} vb="0 0 18 28"><path d="M5 1h13v27h-6C6 28 0 22 0 14V7c0-2 5-2 5-6z" fill="#eee" /><path d="M6 4h4M12 4h4" stroke="#333" strokeWidth="1.500" /></Svg></MouseBadge>
          <Thermo><Svg w={11} h={56} vb="0 0 11 56"><rect x="2" y="1" width="6" height="50" rx="3" fill="#44535e" stroke="#56626b" /><path d="M5 32v16" stroke="#35b8ea" strokeWidth="2" /><circle cx="5" cy="49" r="4.500" fill="#35b8ea" /></Svg></Thermo>
        </Edge>
      </Body>
    </Shell>
  );
}
